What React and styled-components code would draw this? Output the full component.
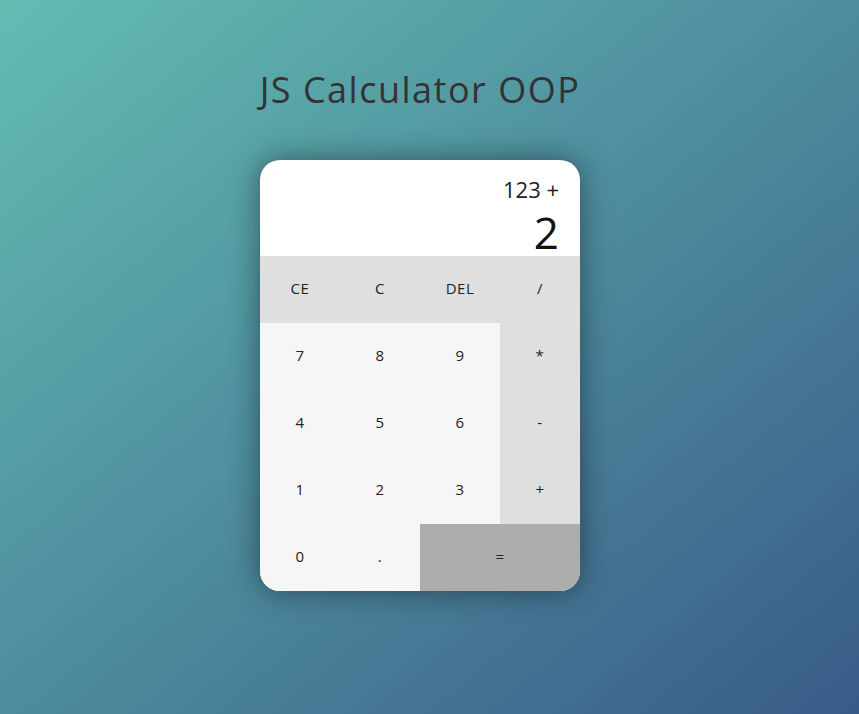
import React from 'react';
import styled, { createGlobalStyle } from 'styled-components';

const GlobalStyle = createGlobalStyle`
    * { box-sizing: border-box; }
    body {
        margin: 0;
        font-family: "Open Sans", "Liberation Sans", sans-serif;
    }
`

const keys = [
    { label: 'CE', kind: 'op' },
    { label: 'C', kind: 'op' },
    { label: 'DEL', kind: 'op' },
    { label: '/', kind: 'op' },
    { label: '7' }, { label: '8' }, { label: '9' },
    { label: '*', kind: 'op' },
    { label: '4' }, { label: '5' }, { label: '6' },
    { label: '-', kind: 'op' },
    { label: '1' }, { label: '2' }, { label: '3' },
    { label: '+', kind: 'op' },
    { label: '0' }, { label: '.' },
    { label: '=', kind: 'eq' },
]

function App() {
    return (
        <Page>
            <GlobalStyle />
            <Title>JS Calculator OOP</Title>
            <Calculator>
                <Display>
                    <Previous>123 +</Previous>
                    <Current>2</Current>
                </Display>
                <Keys>
                    {keys.map((k) => (
                        <Key key={k.label} $kind={k.kind}>{k.label}</Key>
                    ))}
                </Keys>
            </Calculator>
        </Page>
    )
}

export default App

const Page = styled.div`
    min-height: 100vh;
    display: flex;
    flex-direction: column;
    align-items: center;
    padding: 66px 19px 0 0;
    background: linear-gradient(to bottom right, #63bcb2, #385b88);
`

const Title = styled.h1`
    margin: 0 0 47px;
    font-size: 36px;
    font-weight: 400;
    letter-spacing: 1.5px;
    line-height: 47px;
    color: #333;
`

const Calculator = styled.div`
    width: 320px;
    border-radius: 20px;
    overflow: hidden;
    background: #fff;
    box-shadow: 0 0 30px rgba(0, 0, 0, 0.45);
`

const Display = styled.div`
    height: 96px;
    padding: 14px 21px 0;
    display: flex;
    flex-direction: column;
    align-items: flex-end;
`

const Previous = styled.div`
    font-size: 22px;
    line-height: 30px;
    color: #222;
`

const Current = styled.div`
    margin-top: 3px;
    font-size: 44px;
    line-height: 50px;
    color: #111;
`

const Keys = styled.div`
    display: grid;
    grid-template-columns: repeat(4, 80px);
    grid-auto-rows: 67px;
`

const Key = styled.button`
    border: none;
    margin: 0;
    padding: 0 0 3px;
    font-family: inherit;
    font-size: 15px;
    letter-spacing: 0.5px;
    color: #222;
    cursor: pointer;
    grid-column: ${({ $kind }) => ($kind === 'eq' ? 'span 2' : 'auto')};
    background: ${({ $kind }) =>
        $kind === 'eq' ? '#adadad' : $kind === 'op' ? '#dfdfdf' : '#f6f6f6'};
`
